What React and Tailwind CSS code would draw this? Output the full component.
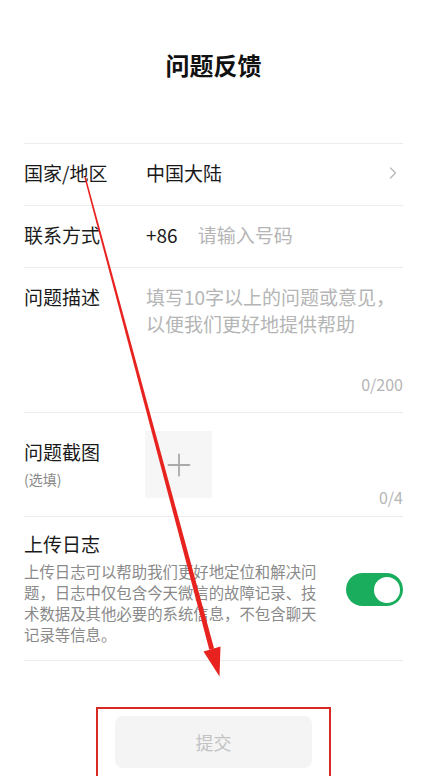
import { ChevronRight, Plus } from "lucide-react";

const font = { fontFamily: '"Noto Sans CJK SC", "Noto Sans", sans-serif' };

const Row = ({ label, children, className = "" }) => (
  <div className={`flex border-b border-[#ececec] ${className}`}>
    <div className="w-[122px] shrink-0 text-[19px] text-[#1a1a1a]">{label}</div>
    <div className="flex-1 min-w-0">{children}</div>
  </div>
);

const Annotation = () => (
  <svg
    className="absolute inset-0 pointer-events-none"
    width="427"
    height="776"
    viewBox="0 0 427 776"
  >
    <polygon points="84.3,177.2 85.7,176.8 214.1,648.4 209.3,649.7" fill="#e8231f" />
    <polygon points="203.5,651.5 220.5,646.5 219.5,676.5" fill="#e8231f" />
  </svg>
);

export default function App() {
  return (
    <div className="relative w-[427px] h-[776px] overflow-hidden bg-white" style={font}>
      <div className="pt-[49px] text-center text-[24px] font-semibold leading-[32px] text-[#111]">
        问题反馈
      </div>

      <div className="mx-6 mt-[62px] border-t border-[#ececec]">
        <Row label="国家/地区" className="h-[62px] items-center pb-[4px] leading-[28px]">
          <div className="flex items-center justify-between">
            <span className="text-[19px] text-[#1a1a1a]">中国大陆</span>
            <ChevronRight className="h-5 w-5 text-[#b8b8b8]" strokeWidth={1.5} />
          </div>
        </Row>

        <Row label="联系方式" className="h-[62px] items-center pb-[3px] leading-[28px]">
          <div className="flex items-center gap-[20px] text-[19px]">
            <span className="text-[#1a1a1a]">+86</span>
            <span className="text-[#b5b5b5]">请输入号码</span>
          </div>
        </Row>

        <Row label="问题描述" className="h-[145px] pt-[15px] leading-[28px]">
          <div className="flex h-full flex-col">
            <p className="text-[19px] leading-[27px] text-[#b5b5b5]">
              填写10字以上的问题或意见，
              <br />
              以便我们更好地提供帮助
            </p>
            <div className="mt-auto pb-[17px] text-right text-[16px] leading-[22px] text-[#b5b5b5]">
              0/200
            </div>
          </div>
        </Row>

        <div className="flex h-[104px] border-b border-[#ececec] pt-[18px]">
          <div className="w-[121px] shrink-0 pt-[7px]">
            <div className="text-[19px] leading-[27px] text-[#1a1a1a]">问题截图</div>
            <div className="mt-[4px] text-[14px] leading-[20px] text-[#8a8a8a]">(选填)</div>
          </div>
          <div className="flex h-[67px] w-[67px] items-center justify-center bg-[#f6f6f6]">
            <Plus className="h-9 w-9 text-[#aaaaaa]" strokeWidth={1.2} />
          </div>
          <div className="flex flex-1 items-end justify-end pb-[8px] text-[16px] leading-[22px] text-[#b5b5b5]">
            0/4
          </div>
        </div>

        <div className="flex h-[144px] items-start justify-between border-b border-[#ececec] pt-[13px]">
          <div className="w-[300px]">
            <div className="text-[19px] leading-[27px] text-[#1a1a1a]">上传日志</div>
            <p className="mt-[4px] text-[15.4px] leading-[21px] text-[#8a8a8a]">
              上传日志可以帮助我们更好地定位和解决问题，日志中仅包含今天微信的故障记录、技术数据及其他必要的系统信息，不包含聊天记录等信息。
            </p>
          </div>
          <div className="mt-[43px] flex h-[33px] w-[57px] items-center justify-end rounded-full bg-[#1aad5e] p-[1.5px]">
            <div className="h-[30px] w-[30px] rounded-full border-2 border-[#1aad5e] bg-white" />
          </div>
        </div>
      </div>

      <div className="mx-auto mt-[46px] h-[80px] w-[235px] border-2 border-b-0 border-[#d62a22] px-[17px] pt-[7px]">
        <button className="flex h-[52px] w-full items-center justify-center rounded-lg bg-[#f4f4f4] text-[18px] text-[#c2c2c2]">
          提交
        </button>
      </div>

      <Annotation />
    </div>
  );
}
